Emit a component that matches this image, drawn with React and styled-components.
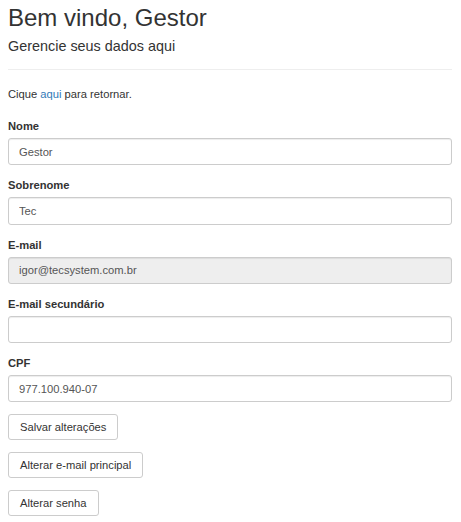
import React from 'react';
import styled, { createGlobalStyle } from 'styled-components';

const GlobalStyle = createGlobalStyle`
  html, body {
    margin: 0;
    padding: 0;
    background: #fff;
  }
  body {
    font-family: "Liberation Sans", Arial, Helvetica, sans-serif;
    font-size: 11.2px;
    line-height: 1.42857;
    color: #333;
  }
  * { box-sizing: border-box; }
`;

const Page = styled.div`
  padding: 5px 9px 0 8px;
`;

const Header = styled.header`
  padding-bottom: 14px;
  border-bottom: 1px solid #eee;
  margin-bottom: 16px;
`;

const Title = styled.h2`
  margin: 0 0 8px;
  font-size: 24px;
  font-weight: 500;
  line-height: 1.1;
  color: #333;
`;

const Subtitle = styled.h4`
  margin: 0;
  font-size: 14.4px;
  font-weight: 500;
  line-height: 1.1;
  color: #333;
`;

const Intro = styled.p`
  margin: 0 0 16px;
`;

const Link = styled.a`
  color: #337ab7;
  text-decoration: none;
`;

const Form = styled.form`
  display: flex;
  flex-direction: column;
`;

const Group = styled.div`
  display: flex;
  flex-direction: column;
  margin-bottom: 12px;
`;

const Label = styled.label`
  font-weight: bold;
  margin-bottom: 4px;
`;

const Input = styled.input`
  height: 27.2px;
  width: 100%;
  padding: 0 10px;
  font-family: inherit;
  font-size: 11.2px;
  color: #555;
  background: ${p => (p.disabled ? '#eee' : '#fff')};
  border: 1px solid #ccc;
  border-radius: 3px;
  box-shadow: inset 0 1px 1px rgba(0, 0, 0, 0.075);
  outline: none;
`;

const Button = styled.button`
  align-self: flex-start;
  height: 26px;
  padding: 0 11px;
  margin-bottom: 12px;
  font-family: inherit;
  font-size: 11.2px;
  color: #333;
  background: #fff;
  border: 1px solid #ccc;
  border-radius: 3px;
  cursor: pointer;
`;

const fields = [
  { label: 'Nome', value: 'Gestor' },
  { label: 'Sobrenome', value: 'Tec' },
  { label: 'E-mail', value: 'igor@tecsystem.com.br', disabled: true },
  { label: 'E-mail secundário', value: '' },
  { label: 'CPF', value: '977.100.940-07' },
];

export default function App() {
  return (
    <>
      <GlobalStyle />
      <Page>
        <Header>
          <Title>Bem vindo, Gestor</Title>
          <Subtitle>Gerencie seus dados aqui</Subtitle>
        </Header>
        <Intro>
          Cique <Link href="#">aqui</Link> para retornar.
        </Intro>
        <Form onSubmit={e => e.preventDefault()}>
          {fields.map(f => (
            <Group key={f.label}>
              <Label>{f.label}</Label>
              <Input defaultValue={f.value} disabled={f.disabled} />
            </Group>
          ))}
          <Button type="submit">Salvar alterações</Button>
          <Button type="button">Alterar e-mail principal</Button>
          <Button type="button">Alterar senha</Button>
        </Form>
      </Page>
    </>
  );
}
